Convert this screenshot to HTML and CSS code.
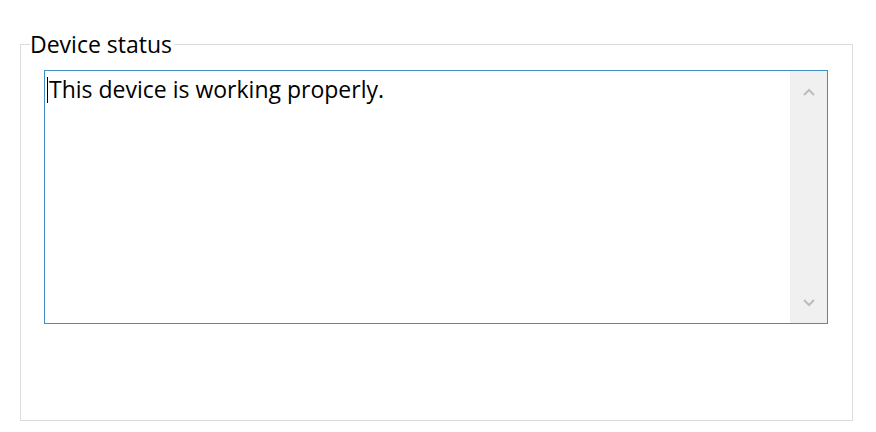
FILE: index.html
```html
<!DOCTYPE html>
<html>
<head>
<meta charset="utf-8">
<link rel="stylesheet" href="styles.css">
</head>
<body>
<div class="page">
  <fieldset class="group">
    <legend class="legend">Device status</legend>
    <div class="textbox">
      <div class="content"><span class="caret"></span>This device is working properly.</div>
      <div class="scrollbar">
        <svg class="arrow" width="14" height="10" viewBox="0 0 14 10"><path d="M2 7 L7 2 L12 7" fill="none" stroke="#bdbdbd" stroke-width="2"/></svg>
        <svg class="arrow" width="14" height="10" viewBox="0 0 14 10"><path d="M2 3 L7 8 L12 3" fill="none" stroke="#bdbdbd" stroke-width="2"/></svg>
      </div>
    </div>
  </fieldset>
</div>
</body>
</html>
```
FILE: styles.css
```css
html, body {
  margin: 0;
  padding: 0;
  background: #ffffff;
  width: 876px;
  height: 432px;
  overflow: hidden;
}
.page {
  padding: 29px 23px 0 20px;
  font-family: "Open Sans", "Liberation Sans", Arial, sans-serif;
}
.group {
  margin: 0;
  border: 1px solid #dcdcdc;
  padding: 0;
  box-sizing: border-box;
  height: 392px;
}
.legend {
  padding: 0 2px 0 0;
  margin-left: 9px;
  font-size: 23px;
  color: #000;
  line-height: 31px;
}
.textbox {
  margin: 10px 24px 0 23px;
  height: 254px;
  border: 1px solid #3f8fc4;
  display: flex;
  box-sizing: border-box;
}
.content {
  flex: 1;
  font-size: 23px;
  line-height: 30px;
  padding: 3px 0 0 2px;
  color: #000;
}
.caret {
  display: inline-block;
  width: 1px;
  height: 26px;
  background: #000;
  vertical-align: top;
  margin-top: 3px;
  margin-right: 1px;
}
.scrollbar {
  width: 37px;
  background: #f0f0f0;
  display: flex;
  flex-direction: column;
  justify-content: space-between;
  align-items: center;
  padding: 17px 0 16px;
}
.arrow {
  display: block;
}
```
